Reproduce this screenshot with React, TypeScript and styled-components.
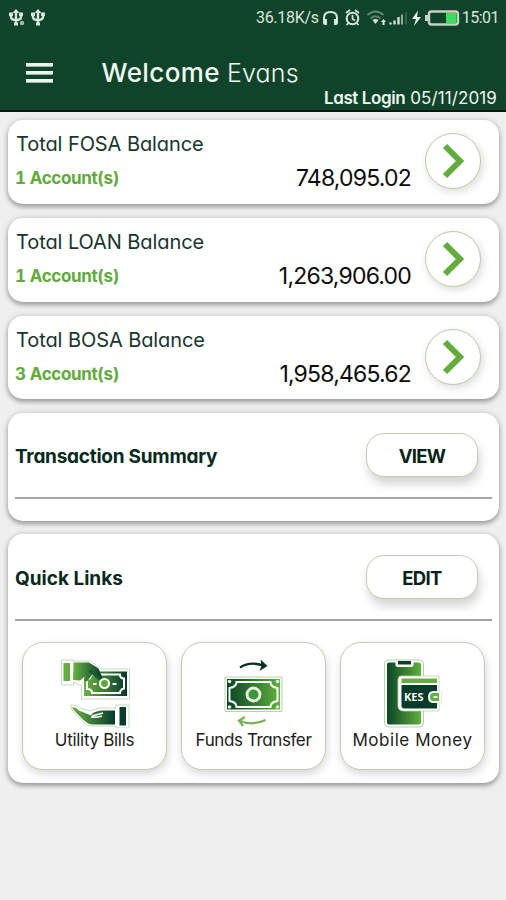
import React from 'react';
import styled, { createGlobalStyle } from 'styled-components';

const Global = createGlobalStyle`
  * { box-sizing: border-box; }
  body { margin: 0; background: #f0f0f0; font-family: Inter, "Liberation Sans", sans-serif; font-feature-settings: "cv11" 1; }
`;

const Screen = styled.div`width: 506px; height: 900px; overflow: hidden; background: #efefef;`;

const Header = styled.header`
  height: 112px; background: #10442a; border-bottom: 2px solid #06180e; color: #f1f7f1;
  display: flex; flex-direction: column;
`;
const StatusBar = styled.div`
  height: 36px; padding: 0 7px 0 8px; display: flex; align-items: center; justify-content: space-between;
  font-family: Roboto, sans-serif; color: #d9e6dc;
`;
const StatusGroup = styled.div`display: flex; align-items: center; height: 36px; svg { display: block; }`;
const TitleRow = styled.div`height: 50px; padding: 24px 26px 0; display: flex; align-items: center;`;
const MenuButton = styled.button`
  width: 27px; height: 20px; padding: 0; border: 0; background: none; margin: 0 48.5px 0 0;
  display: flex; flex-direction: column; justify-content: space-between;
`;
const Bar = styled.span`display: block; width: 27px; height: 4px; background: #eef5ee; border-bottom: 1px solid #9bb5a4;`;

const Label = styled.span<{ $size: number; $weight?: number; $spacing?: number; $color?: string }>`
  display: block; white-space: nowrap; line-height: 24px;
  font-size: ${p => p.$size}px; font-weight: ${p => p.$weight ?? 400};
  letter-spacing: ${p => p.$spacing ?? 0}px; color: ${p => p.$color ?? 'inherit'};
`;
const Greeting = styled(Label)`margin-right: 7px;`;
const Count = styled(Label)`font-variant-numeric: tabular-nums;`;
const HeadLabel = styled(Label)`padding-top: 4px; line-height: 28px;`;
const LoginRow = styled.div`display: flex; justify-content: flex-end; gap: 5px; padding-right: 9px; height: 24px;`;

const Content = styled.main`padding: 8px 7px 0 8px; display: flex; flex-direction: column;`;
const Card = styled.section<{ $height: number; $gap: number }>`
  height: ${p => p.$height}px; margin-bottom: ${p => p.$gap}px; background: #fff; border-radius: 15px;
  box-shadow: 0 3px 5px rgba(0,0,0,.3), 0 0 6px rgba(0,0,0,.15);
`;
const BalanceCard = styled(Card)`display: flex; padding: 12px 18px 0 7px;`;
const BalanceInfo = styled.div`flex: 1; display: flex; flex-direction: column; gap: 10px;`;
const TitleWrap = styled.div`padding-left: 1px;`;
const BalanceLine = styled.div`display: flex; justify-content: space-between;`;
const Round = styled.button`
  width: 56px; height: 56px; margin: 1px 0 0 14px; padding: 0; border-radius: 50%; background: #fff;
  border: 1px solid #b9cda1; box-shadow: 2px 3px 9px rgba(0,0,0,.14);
  display: flex; align-items: center; justify-content: center;
`;
const SectionHead = styled.div<{ $height: number }>`
  height: ${p => p.$height}px; margin: 0 7px; padding: 0 14px 0 0; border-bottom: 2px solid #a5a5a5;
  display: flex; align-items: center; justify-content: space-between;
`;
const Pill = styled.button`
  width: 112px; height: 44px; padding: 2px 0 0; border-radius: 18px; background: #fff; border: 1px solid #c0ceaa;
  box-shadow: 2px 7px 10px rgba(0,0,0,.17); display: flex; align-items: center; justify-content: center;
  font-family: inherit; font-feature-settings: inherit; color: #06231a;
`;
const Tiles = styled.div`display: grid; grid-template-columns: repeat(3, 145px); gap: 14px; padding: 21px 0 0 14px;`;
const Tile = styled.button`
  height: 128px; padding: 14px 0 0; border-radius: 21px; background: #fff; border: 1px solid #c0d0ad;
  box-shadow: 1px 4px 8px rgba(0,0,0,.16); display: flex; flex-direction: column; align-items: center;
  font-family: inherit; font-feature-settings: inherit; color: #1c1c20;
  svg { display: block; }
`;

const Usb = ({ dot = false }: { dot?: boolean }) => (
  <svg width="22" height="18" viewBox="0 0 22 18" fill="none" stroke="#d9e6dc" strokeWidth="2.400">
    <path d="M8 3v13M3 5v3q0 3 5 3q5 0 5-3V5" />
    <path d="M8 0l3.500 4h-7zM1 3.500h4v3.500H1zM11 3.500h4v3.500h-4zM6 13.500h4v3H6z" fill="#d9e6dc" stroke="none" />
    {dot && <circle cx="14" cy="14" r="2.200" fill="#9fbfaa" stroke="none" />}
  </svg>
);

const StatusIcons = () => (
  <svg width="143" height="24" viewBox="320 6 143 24" fill="none" stroke="#d9e6dc" strokeWidth="2">
    <path d="M325 23v-5q0-6 6.500-6t6.500 6v5" />
    <path d="M324 19h4v6h-2q-2 0-2-2zM335 19h4v4q0 2-2 2h-2z" fill="#d9e6dc" stroke="none" />
    <circle cx="353.500" cy="18.500" r="5.800" />
    <path d="M353.500 15v4l2.500 1.500M347 13l4-3M360 13l-4-3M349.500 23l-2 2M357.500 23l2 2" strokeWidth="1.700" />
    <path d="M368.500 15q8-7 16 0M371.500 18.500q5-4.500 10 0" stroke="#5c8871" strokeWidth="1.800" />
    <path d="M373.500 20q3-2 6 0l-3 4zM384.500 19l2.500 3h-1.500v3h-2v-3H382z" fill="#d9e6dc" stroke="none" />
    <path d="M391.500 22.500v2M395.500 20.500v4M399.500 17v7.500" strokeWidth="2.300" />
    <path d="M403 14.500v10" stroke="#8eac99" strokeWidth="2" />
    <path d="M407 12v12.500" stroke="#3c6d50" strokeWidth="1.500" />
    <path d="M419 10.500l-6 8.500h4l-2 7 7-9h-4z" fill="#eef5ee" stroke="none" />
    <rect x="430" y="11.500" width="29" height="13" rx="2.500" stroke="#c5d2c8" strokeWidth="2.400" />
    <path d="M427.500 15v6" stroke="#c5d2c8" strokeWidth="3" />
    <path d="M447 13h10.500v10H447z" fill="#3ddd5b" stroke="none" />
  </svg>
);

const Gradients = () => (
  <defs>
    <linearGradient id="lr"><stop offset="0" stopColor="#69b343" /><stop offset="1" stopColor="#073a2a" /></linearGradient>
    <linearGradient id="rl"><stop offset="0" stopColor="#0a4427" /><stop offset="1" stopColor="#5fb13c" /></linearGradient>
  </defs>
);

const UtilityIcon = () => (
  <svg width="72" height="71" viewBox="58 657 72 71">
    <Gradients />
    <g stroke="#b9cfae" strokeWidth=".8" fill="#fff">
      <path d="M60.500 660h12v1h17l10 8h29v30h-48v-13l-8-4v3h-12z" />
      <path d="M70 705q5-1 8 3l11 3 9-3h17v-3h13v23h-13v-2H89q-4 0-18-16-2-3-1-5z" />
    </g>
    <path d="M83 671.500h43v24.500H83z" fill="url(#lr)" />
    <path d="M90 674.500h29q0 4 4 4v10q-4 1-4 4.500H91q0-4-5-4v-10q4 0 4-4.500z" fill="none" stroke="#fff" strokeWidth="2" />
    <path d="M92 684h3.500M111.500 684h4" stroke="#fff" strokeWidth="2" />
    <path d="M62.500 663h6.500v18h-6.500z" fill="#65ad40" />
    <path d="M72.500 662.500H88l9.500 6 4 9.500-3 1.500-6.500-6-6 8-3-1 2-5-6 5-7-.5z" fill="url(#lr)" />
    <path d="M89.500 671l9 8" stroke="#175c35" strokeWidth="3" strokeLinecap="round" />
    <circle cx="103.500" cy="683.500" r="4.500" fill="#5fa53d" stroke="#fff" strokeWidth="2.200" />
    <path d="M71 707.500q3-1 7 3l12 5q1-4 11-5h13v14H91q-5 0-14-10-5-5-6-7z" fill="url(#lr)" />
    <path d="M91 716l11-3M90 717q5 1 11-1" fill="none" stroke="#fff" strokeWidth="1.500" />
    <path d="M118.500 707h6.500v18.500h-6.500z" fill="#0c3d2c" />
  </svg>
);

const FundsIcon = () => (
  <svg width="72" height="71" viewBox="217.500 657 72 71">
    <Gradients />
    <path d="M239.500 667.500q10-6.500 23-2" fill="none" stroke="#0a2f24" strokeWidth="2.400" />
    <path d="M260 659.500l7 6.500-8 5 2-5z" fill="#0a2f24" />
    <path d="M224.500 677h57v34.500h-57z" fill="#fff" stroke="#b8d4a6" strokeWidth="1" />
    <path d="M226.500 679h53v30.500h-53z" fill="url(#rl)" />
    <path d="M236 682q0 5-7 6v13q7 1 7 6h34q0-5 7-6v-13q-7-1-7-6z" fill="none" stroke="#fff" strokeWidth="2" />
    <circle cx="229" cy="681.500" r="1.800" fill="#e4f2df" /><circle cx="277" cy="681.500" r="1.800" fill="#e4f2df" />
    <circle cx="229" cy="707" r="1.800" fill="#e4f2df" /><circle cx="277" cy="707" r="1.800" fill="#e4f2df" />
    <circle cx="253" cy="694.500" r="6.500" fill="#3f963a" stroke="#e8f7df" strokeWidth="2.800" />
    <path d="M240 721q12 5 25-1" fill="none" stroke="#75b251" strokeWidth="2.200" />
    <path d="M244.500 717l-6 3.500 4 5.500" fill="none" stroke="#75b251" strokeWidth="2.200" />
  </svg>
);

const IconText = styled.text`font: 700 11px "Open Sans", sans-serif;`;
const MobileIcon = () => (
  <svg width="72" height="71" viewBox="377 657 72 71">
    <Gradients />
    <rect x="384.500" y="660" width="39" height="67" rx="4" fill="#fff" stroke="#b7d2a5" />
    <rect x="387" y="662.500" width="34" height="62" rx="2" fill="url(#rl)" />
    <path d="M395.500 661h18v4q0 2-2 2h-14q-2 0-2-2z" fill="#fff" />
    <path d="M398 661h13v3.500h-13z" fill="#123c25" />
    <path d="M401 676h38v15h2v12h-2v8h-35q-6 0-6-5v-26q0-4 3-4z" fill="#fff" stroke="#b7d2a5" strokeWidth=".8" />
    <path d="M401.500 678.500H437v4.500h-35.500z" fill="#65af40" />
    <path d="M401.500 685H437v23.500h-33q-2.500 0-2.500-3z" fill="#083b2c" />
    <path d="M429 697q0-5 4.500-5h6.500v10h-6.500q-4.500 0-4.500-5z" fill="#66af42" stroke="#fff" strokeWidth="2" />
    <path d="M433.500 697h4" stroke="#e1f4d8" strokeWidth="2" />
    <IconText x="404" y="700.500" fill="#f3fbe8">KES</IconText>
  </svg>
);

const balances = [
  { title: 'Total FOSA Balance', count: '1 Account(s)', amount: '748,095.02', height: 84, gap: 14 },
  { title: 'Total LOAN Balance', count: '1 Account(s)', amount: '1,263,906.00', height: 83.5, gap: 14 },
  { title: 'Total BOSA Balance', count: '3 Account(s)', amount: '1,958,465.62', height: 83.5, gap: 14 },
];
const links = [
  { name: 'Utility Bills', icon: <UtilityIcon />, spacing: -0.3 },
  { name: 'Funds Transfer', icon: <FundsIcon />, spacing: -0.4 },
  { name: 'Mobile Money', icon: <MobileIcon />, spacing: 0.55 },
];

export default function App() {
  return (
    <Screen>
      <Global />
      <Header>
        <StatusBar>
          <StatusGroup><Usb dot /><Usb /></StatusGroup>
          <StatusGroup>
            <Label $size={16} $spacing={-0.3}>36.18K/s</Label>
            <StatusIcons />
            <Label $size={16} $spacing={-0.5}>15:01</Label>
          </StatusGroup>
        </StatusBar>
        <TitleRow>
          <MenuButton aria-label="Menu"><Bar /><Bar /><Bar /></MenuButton>
          <Greeting $size={26} $weight={500} $spacing={0.4}>Welcome</Greeting>
          <Label $size={25} $weight={300} $spacing={0.15}>Evans</Label>
        </TitleRow>
        <LoginRow>
          <Label $size={17} $weight={600} $spacing={-0.4}>Last Login</Label>
          <Label $size={17} $spacing={0.1}>05/11/2019</Label>
        </LoginRow>
      </Header>
      <Content>
        {balances.map(b => (
          <BalanceCard key={b.title} $height={b.height} $gap={b.gap}>
            <BalanceInfo>
              <TitleWrap><Label $size={20} $spacing={-0.08} $color="#18352e">{b.title}</Label></TitleWrap>
              <BalanceLine>
                <Count $size={17} $weight={700} $spacing={-0.38} $color="#62aa3c">{b.count}</Count>
                <Label $size={23} $spacing={-0.8} $color="#0b0b0d">{b.amount}</Label>
              </BalanceLine>
            </BalanceInfo>
            <Round aria-label={b.title}>
              <svg width="24" height="36" viewBox="0 0 24 36" fill="none" stroke="#61ac3c" strokeWidth="6">
                <path d="M4 3l15 15L4 33" />
              </svg>
            </Round>
          </BalanceCard>
        ))}
        <Card $height={108} $gap={13}>
          <SectionHead $height={86}>
            <HeadLabel $size={19} $weight={700} $spacing={-0.25} $color="#08291d">Transaction Summary</HeadLabel>
            <Pill><Label $size={18.5} $weight={700} $spacing={-0.7}>VIEW</Label></Pill>
          </SectionHead>
        </Card>
        <Card $height={249} $gap={0}>
          <SectionHead $height={87}>
            <HeadLabel $size={19} $weight={700} $color="#08291d">Quick Links</HeadLabel>
            <Pill><Label $size={18.5} $weight={700} $spacing={-0.7}>EDIT</Label></Pill>
          </SectionHead>
          <Tiles>
            {links.map(l => (
              <Tile key={l.name}>{l.icon}<Label $size={17} $spacing={l.spacing}>{l.name}</Label></Tile>
            ))}
          </Tiles>
        </Card>
      </Content>
    </Screen>
  );
}
